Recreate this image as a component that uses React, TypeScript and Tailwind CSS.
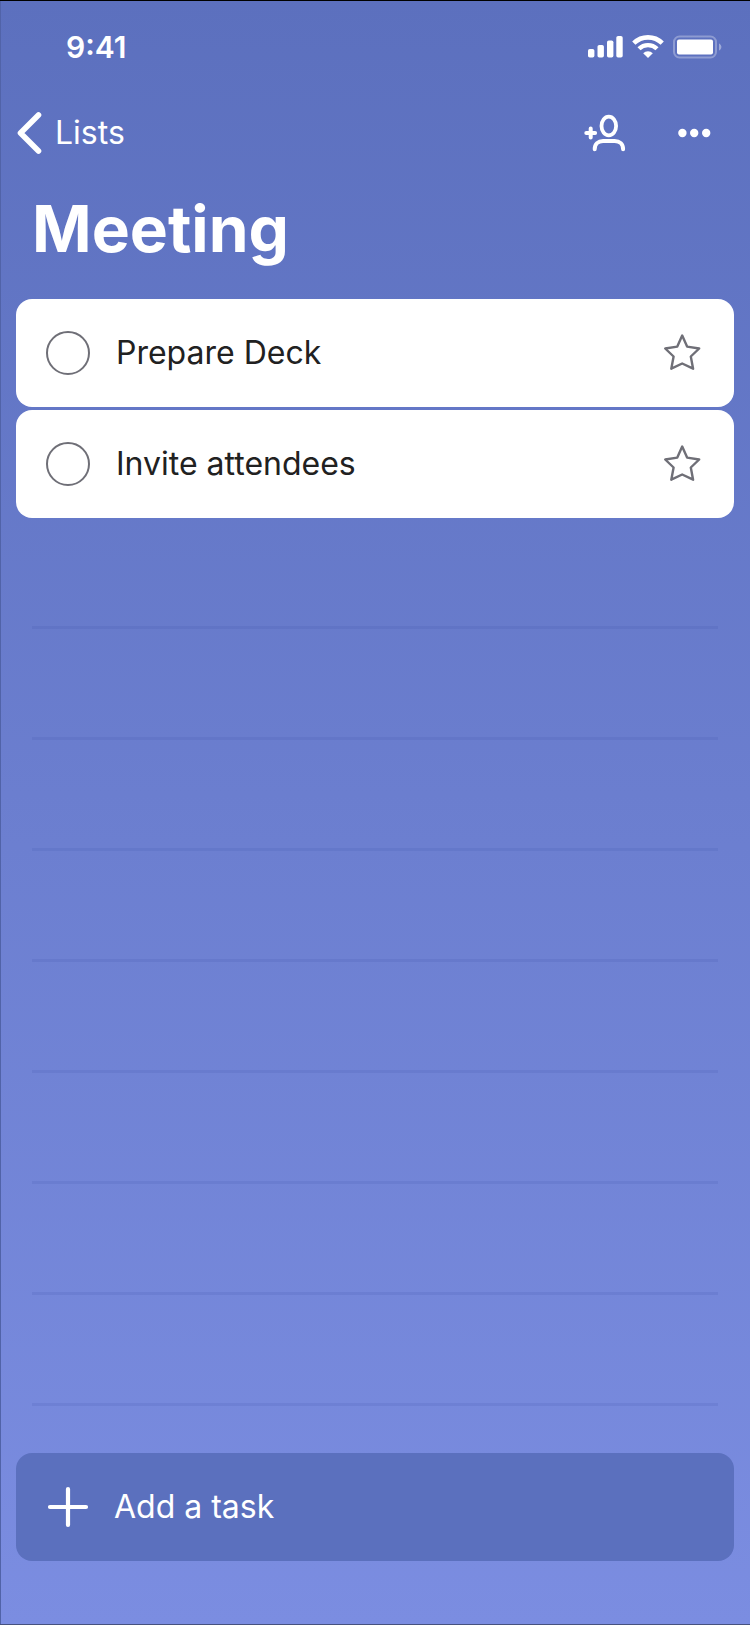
import { useState } from "react";

const tasks = [
  { id: "prepare-deck", title: "Prepare Deck" },
  { id: "invite-attendees", title: "Invite attendees" },
];

const emptyRows = [1, 2, 3, 4, 5, 6, 7, 8];

const StatusBar = () => {
  return (
    <div className="flex h-[92px] items-center justify-between pl-[66px] pr-7">
      <p className="text-[30px] leading-9 font-semibold">9:41</p>
      <div className="flex items-center gap-[9px]">
        <svg width="35" height="24" viewBox="0 0 35 24" fill="currentColor">
          <rect x="0" y="14" width="6.4" height="8.6" rx="1.8" />
          <rect x="9.5" y="10" width="6.4" height="12.6" rx="1.8" />
          <rect x="19" y="5.5" width="6.4" height="17.1" rx="1.8" />
          <rect x="28.3" y="1" width="6.4" height="21.6" rx="1.8" />
        </svg>
        <svg width="32" height="24" viewBox="0 0 32 24" fill="none" stroke="currentColor">
          <path d="M1.8 8.2a20.2 20.2 0 0 1 28.4 0" strokeWidth="4.6" />
          <path d="M7 13.8a12.8 12.8 0 0 1 18 0" strokeWidth="4.4" />
          <path d="M16 23l-4.8-4.8a6.8 6.8 0 0 1 9.6 0z" fill="currentColor" stroke="none" />
        </svg>
        <svg width="49" height="24" viewBox="0 0 49 24" fill="none">
          <rect x="1" y="1.5" width="42" height="21" rx="5.5" stroke="white" strokeOpacity="0.3" strokeWidth="2" />
          <rect x="4" y="4.6" width="36" height="14.8" rx="2" fill="white" />
          <path d="M46 8.5c1.4.6 2.4 2 2.4 3.5s-1 2.9-2.4 3.5z" fill="white" fillOpacity="0.4" />
        </svg>
      </div>
    </div>
  );
};

const NavBar = () => {
  return (
    <nav className="flex h-20 items-center justify-between pl-4 pr-8">
      <a href="#lists" className="flex items-center gap-3 text-[32px] leading-10">
        <svg width="27" height="44" viewBox="0 0 27 44" fill="none" stroke="currentColor">
          <path d="M22.5 4L4.5 22l18 18" strokeWidth="5.6" strokeLinecap="round" strokeLinejoin="round" />
        </svg>
        Lists
      </a>
      <div className="flex items-center gap-11">
        <button type="button" aria-label="Share list">
          <svg width="44" height="44" viewBox="0 0 44 44" fill="none" stroke="currentColor" strokeLinecap="round">
            <ellipse cx="26.8" cy="15" rx="7.3" ry="9.4" strokeWidth="3.8" />
            <path d="M12.7 38.2c0-5 3.4-8.2 8.4-8.2h11.6c5 0 8.4 3.2 8.4 8.2" strokeWidth="4" />
            <path d="M8.7 17.6v8.8M4.3 22h8.8" strokeWidth="4" />
          </svg>
        </button>
        <button type="button" aria-label="More options">
          <svg width="48" height="44" viewBox="0 0 48 44" fill="currentColor">
            <circle cx="12.4" cy="22" r="4.2" />
            <circle cx="24.2" cy="22" r="4.2" />
            <circle cx="36.2" cy="22" r="4.2" />
          </svg>
        </button>
      </div>
    </nav>
  );
};

const TaskCard = ({ id, title }: { id: string; title: string }) => {
  const [isDone, setIsDone] = useState(false);
  const [isStarred, setIsStarred] = useState(false);

  return (
    <li className="flex h-[108px] items-center rounded-2xl bg-white px-[30px] text-[#212121]">
      <input
        id={id}
        type="checkbox"
        checked={isDone}
        onChange={() => setIsDone(!isDone)}
        className="size-11 shrink-0 appearance-none rounded-full border-2 border-[#6f6f77] checked:bg-[#5c70be]"
      />
      <label htmlFor={id} className="flex-1 pl-[26px] text-[32px] leading-10">
        {title}
      </label>
      <button type="button" aria-label={`Star ${title}`} onClick={() => setIsStarred(!isStarred)}>
        <svg
          width="44"
          height="44"
          viewBox="0 0 44 44"
          fill={isStarred ? "#6f6f77" : "none"}
          stroke="#6f6f77"
          strokeWidth="2.4"
          strokeLinejoin="round"
        >
          <path d="M22.2 4.6l4.9 11 12.1 1.9-8.4 8 2.3 12.2-10.9-5.2-10.9 5.2 2.3-12.2-8.4-8 12.1-1.9z" />
        </svg>
      </button>
    </li>
  );
};

export default function App() {
  return (
    <div className="flex min-h-screen flex-col border-t border-b border-t-black border-b-[#46527f] bg-linear-to-b from-[#5c70be] to-[#7b8de1] font-[Inter,sans-serif] text-white shadow-[inset_1px_0_0_#5163a8]">
      <StatusBar />
      <NavBar />

      <h1 className="px-8 pt-4 pb-[30px] text-[64px] leading-20 font-bold">Meeting</h1>

      <main className="flex flex-1 flex-col px-4 pb-[63px]">
        <ul className="flex flex-col gap-[3px]">
          {tasks.map((task) => (
            <TaskCard key={task.id} id={task.id} title={task.title} />
          ))}
        </ul>

        <div className="px-4">
          {emptyRows.map((row) => (
            <div key={row} className="h-[111px] border-b-3 border-[#3c50aa]/15" />
          ))}
        </div>

        <button
          type="button"
          className="mt-auto flex h-[108px] items-center gap-6 rounded-2xl bg-[#5b70be] pl-[30px] text-[32px] leading-10"
        >
          <svg width="44" height="44" viewBox="0 0 44 44" fill="none" stroke="currentColor">
            <path d="M22 4v36M4 22h36" strokeWidth="4.2" strokeLinecap="round" />
          </svg>
          Add a task
        </button>
      </main>
    </div>
  );
}
